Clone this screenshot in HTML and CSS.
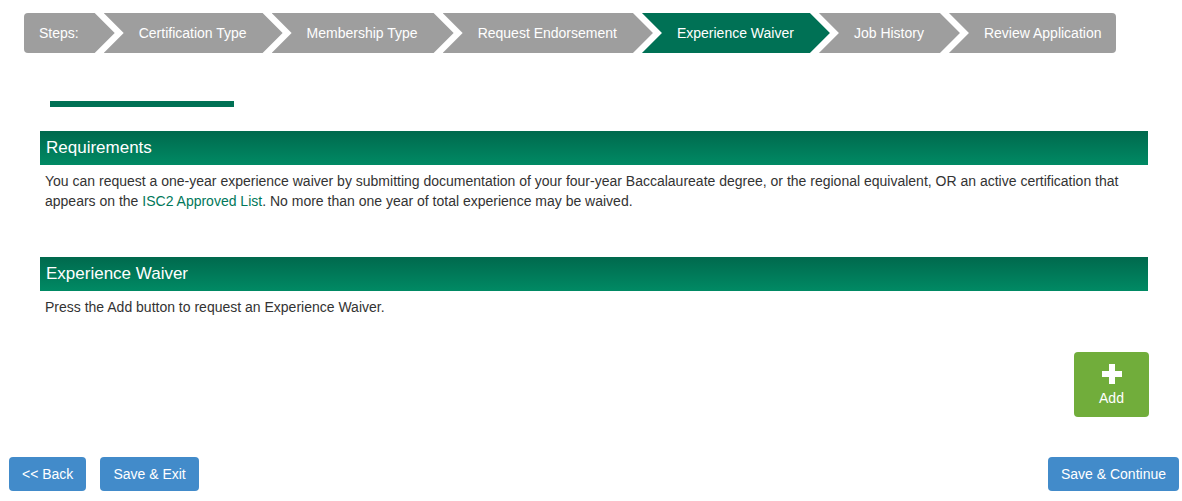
FILE: index.html
```html
<!DOCTYPE html>
<html lang="en">
<head>
    <meta charset="UTF-8">
    <meta name="viewport" content="width=device-width, initial-scale=1.0">
    <title>Experience Waiver</title>
    <link rel="stylesheet" href="styles.css">
</head>
<body>
    <ul class="steps">
        <li class="step first">Steps:</li>
        <li class="step">Certification Type</li>
        <li class="step">Membership Type</li>
        <li class="step">Request Endorsement</li>
        <li class="step active">Experience Waiver</li>
        <li class="step">Job History</li>
        <li class="step last">Review Application</li>
    </ul>

    <div class="progress-line"></div>

    <div class="content">
        <div class="section">
            <h3 class="section-title">Requirements</h3>
            <p class="section-text">
                You can request a one-year experience waiver by submitting documentation of your four-year Baccalaureate degree, or the regional equivalent, OR an active certification that appears on the <a href="#">ISC2 Approved List</a>. No more than one year of total experience may be waived.
            </p>
        </div>

        <div class="section waiver">
            <h3 class="section-title">Experience Waiver</h3>
            <p class="section-text">Press the Add button to request an Experience Waiver.</p>
        </div>

        <div class="add-row">
            <button class="btn-add">
                <svg width="20" height="20" viewBox="0 0 20 20">
                    <rect x="7" y="0" width="6" height="20" fill="#fff"/>
                    <rect x="0" y="7" width="20" height="6" fill="#fff"/>
                </svg>
                <span>Add</span>
            </button>
        </div>
    </div>

    <div class="footer">
        <div class="footer-left">
            <button class="btn">&lt;&lt; Back</button>
            <button class="btn">Save &amp; Exit</button>
        </div>
        <button class="btn">Save &amp; Continue</button>
    </div>
</body>
</html>
```

FILE: styles.css
```css
body {
    font-family: "Liberation Sans", Arial, sans-serif;
    font-size: 14px;
    color: #333;
    margin: 0;
    background: #fff;
}

/* step bar */
.steps {
    list-style: none;
    display: flex;
    margin: 13px 0 0 24px;
    padding: 0;
    height: 40px;
}

.step {
    display: flex;
    align-items: center;
    background: #9e9e9e;
    color: #fff;
    height: 40px;
    padding: 0 36px 0 35px;
    margin-left: -11px;
    white-space: nowrap;
    clip-path: polygon(0 0, calc(100% - 20px) 0, 100% 50%, calc(100% - 20px) 100%, 0 100%, 20px 50%);
}

.step.first {
    margin-left: 0;
    padding-left: 15px;
    padding-right: 36px;
    border-radius: 4px 0 0 4px;
    clip-path: polygon(0 0, calc(100% - 20px) 0, 100% 50%, calc(100% - 20px) 100%, 0 100%);
}

.step.last {
    padding-right: 15px;
    border-radius: 0 4px 4px 0;
    clip-path: polygon(0 0, 100% 0, 100% 100%, 0 100%, 20px 50%);
}

.step.active {
    background: #007155;
}

.progress-line {
    width: 184px;
    height: 6px;
    background: #007155;
    margin: 48px 0 0 50px;
}

/* sections */
.content {
    margin: 24px 34px 0 40px;
}

.section-title {
    margin: 0;
    height: 34px;
    line-height: 34px;
    padding: 0 6px;
    font-size: 17px;
    font-weight: normal;
    color: #fff;
    background: linear-gradient(to bottom, #00694d, #008a64);
}

.section-text {
    margin: 0;
    padding: 6px 5px 0 5px;
    line-height: 20px;
}

.section-text a {
    color: #00785a;
    text-decoration: none;
}

.waiver {
    margin-top: 46px;
}

.add-row {
    display: flex;
    justify-content: flex-end;
    margin-top: 35px;
    margin-right: -1px;
}

.btn-add {
    width: 75px;
    height: 65px;
    border: none;
    border-radius: 4px;
    background: #71ad3b;
    color: #fff;
    font-family: inherit;
    font-size: 14px;
    display: flex;
    flex-direction: column;
    align-items: center;
    padding: 12px 0 0 0;
    cursor: pointer;
}

.btn-add span {
    margin-top: 6px;
}

/* bottom buttons */
.footer {
    display: flex;
    justify-content: space-between;
    margin-top: 40px;
    padding: 0 3px 0 9px;
}

.footer-left {
    display: flex;
    gap: 14px;
}

.btn {
    height: 34px;
    padding: 0 13px;
    border: none;
    border-radius: 4px;
    background: #428bca;
    color: #fff;
    font-family: inherit;
    font-size: 14px;
    cursor: pointer;
}
```
